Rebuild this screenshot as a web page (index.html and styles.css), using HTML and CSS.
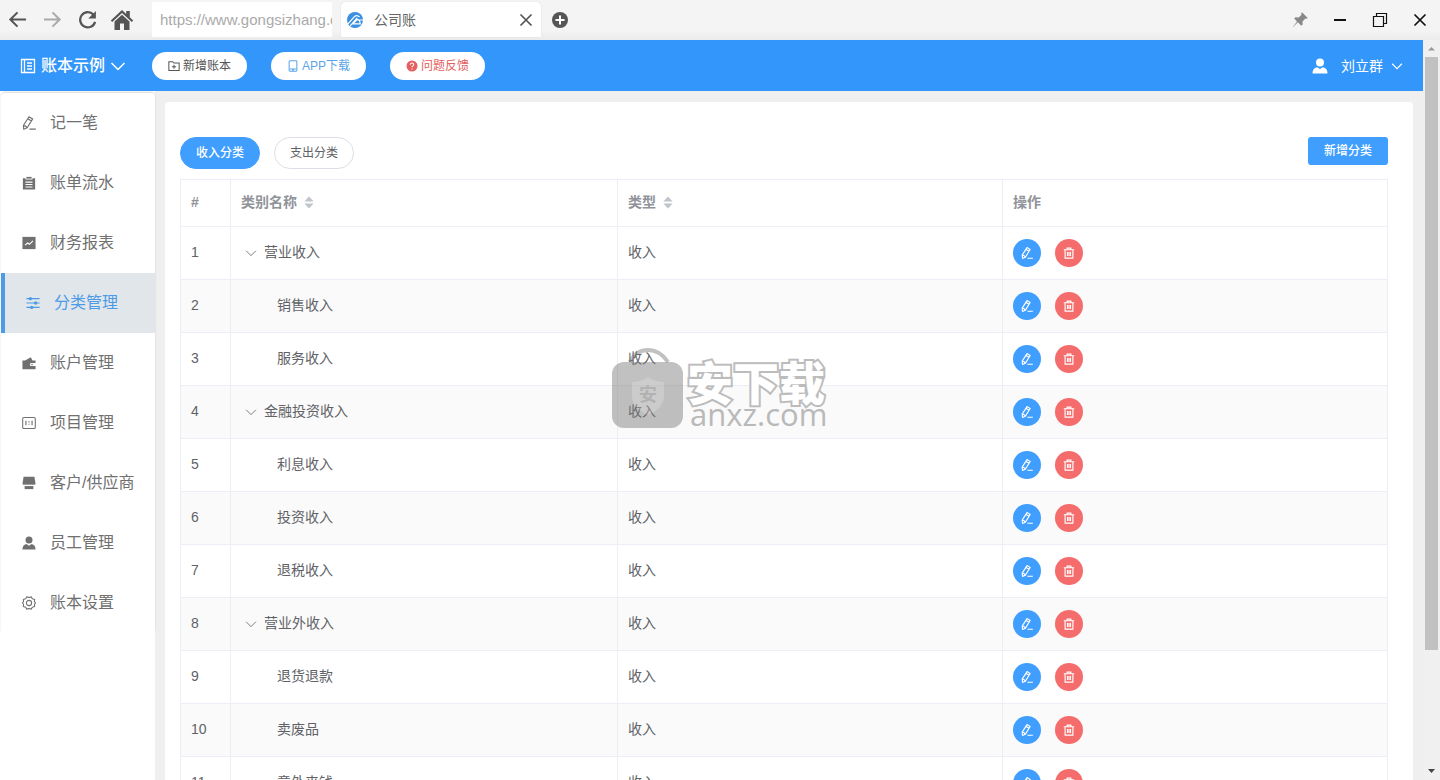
FILE: index.html
```html
<!DOCTYPE html>
<html lang="zh-CN">
<head>
<meta charset="utf-8">
<title>公司账</title>
<link rel="stylesheet" href="styles.css">
</head>
<body>
<svg class="defs" aria-hidden="true">
  <symbol id="i-left" viewBox="0 0 20 20"><path d="M19 10H3M10 2.500L2.500 10l7.500 7.500" fill="none" stroke="currentColor" stroke-width="2.200"/></symbol>
  <symbol id="i-right" viewBox="0 0 20 20"><path d="M1 10h16M10 2.500l7.500 7.500-7.500 7.500" fill="none" stroke="currentColor" stroke-width="2.200"/></symbol>
  <symbol id="i-reload" viewBox="0 0 20 20"><path d="M16.300 5A8 8 0 1 0 18 12.500" fill="none" stroke="currentColor" stroke-width="2.400"/><path d="M18.800 1v8h-8z" fill="currentColor"/></symbol>
  <symbol id="i-home" viewBox="0 0 24 22"><path d="M12 1L.8 11.500l1.400 1.500L12 4l9.800 9 1.400-1.500-3.400-3.200V2h-3.600v2.900z" fill="currentColor"/><path d="M4.500 12.500L12 5.700l7.500 6.800V21H14v-6.500h-4V21H4.500z" fill="currentColor"/></symbol>
  <symbol id="i-x" viewBox="0 0 16 16"><path d="M2.500 2.500l11 11M13.500 2.500l-11 11" fill="none" stroke="currentColor" stroke-width="1.700"/></symbol>
  <symbol id="i-plus" viewBox="0 0 16 16"><circle cx="8" cy="8" r="8" fill="currentColor"/><path d="M8 3.500v9M3.500 8h9" stroke="#fff" stroke-width="2"/></symbol>
  <symbol id="i-pin" viewBox="0 0 16 16"><path d="M10 .3l5.700 5.700-1.300.7-1-.2-2.900 2.900.2 3-1.400 1.300-3.500-3.500L.3 15.700 5 9.400 2.200 6.600l1.300-1.300 3.200.2L9.500 2.700l-.3-1.200z" fill="currentColor"/></symbol>
  <symbol id="i-min" viewBox="0 0 16 16"><path d="M2 8h12" stroke="currentColor" stroke-width="2"/></symbol>
  <symbol id="i-restore" viewBox="0 0 16 16"><path d="M4.500 4V1.500h10v10H12M1.500 4.500h10v10h-10z" fill="none" stroke="currentColor" stroke-width="1.200"/></symbol>
  <symbol id="i-logo" viewBox="0 0 16 16"><circle cx="8" cy="8" r="8" fill="#3b8fe0"/><path d="M1 11.800L7.200 4.800q2.600-2.600 5.300.2M3.200 13.800l7-8M6 11.800L9.500 8q3-1.500 3.800 3.800zM10 8h6" fill="none" stroke="#fff" stroke-width="1.200"/></symbol>
  <symbol id="i-book" viewBox="0 0 16 16"><path d="M1.500 1.500h13v13h-13zM4.500 1.500v13M7 5h5M7 8h5M7 11h5" fill="none" stroke="currentColor" stroke-width="1.300"/></symbol>
  <symbol id="i-down" viewBox="0 0 16 16"><path d="M1.500 5L8 11.500 14.500 5" fill="none" stroke="currentColor"/></symbol>
  <symbol id="i-folder" viewBox="0 0 14 14"><path d="M1 2h4.500L7 3.500h6v8.800H1zM7 5.500v4.800M4.600 7.900h4.800" fill="none" stroke="currentColor"/></symbol>
  <symbol id="i-phone" viewBox="0 0 14 14"><rect x="2.500" y="1" width="9" height="12" rx="1" fill="none" stroke="currentColor"/><path d="M3 10.500h8M6 11.800h2" stroke="currentColor"/></symbol>
  <symbol id="i-help" viewBox="0 0 14 14"><circle cx="7" cy="7" r="6.400" fill="currentColor"/><path d="M5 5.500q.2-1.900 2-1.900t2 1.700q0 1-1 1.600T7 8.600M7 9.800v1.200" fill="none" stroke="#fff"/></symbol>
  <symbol id="i-user" viewBox="0 0 16 16"><circle cx="8" cy="4.600" r="4" fill="currentColor"/><path d="M.5 15.500q0-5.200 4.500-6.300L8 11l3-1.800q4.500 1.100 4.500 6.300z" fill="currentColor"/></symbol>
  <symbol id="i-edit" viewBox="0 0 16 16"><path d="M8 .8l4.200 2.500-6.300 10.200L2 15.200l-.4-4.300zM6.600 3.200l4.200 2.500M1.700 11q2.800-.1 4.100 2.400M8.500 15h7.300" fill="none" stroke="currentColor" stroke-linejoin="round"/></symbol>
  <symbol id="i-list" viewBox="0 0 16 16"><path d="M1 2.500H4V4h8V2.500h3v13H1z" fill="currentColor"/><path d="M5 1h6v2H5z" fill="currentColor"/><path d="M4 7h8M4 9.700h8M4 12.500h8" stroke="#fff" stroke-width="1.200"/></symbol>
  <symbol id="i-chart" viewBox="0 0 16 16"><path d="M.5 1h15v14H.5z" fill="currentColor"/><path d="M3.500 10.500l3-2.500 2 1.500 4-4" fill="none" stroke="#fff" stroke-width="1.300"/></symbol>
  <symbol id="i-sliders" viewBox="0 0 16 16"><path d="M.5 3h15M.5 8h15M.5 13h15" stroke="currentColor" stroke-width="1.200"/><g fill="currentColor"><circle cx="5" cy="3" r="1.900"/><circle cx="11" cy="8" r="1.900"/><circle cx="6.500" cy="13" r="1.900"/></g></symbol>
  <symbol id="i-wallet" viewBox="0 0 16 16"><path d="M.5 5h3l6.500-3.500L12 5h3.500v3H11q-2 0-2 1.700t2 1.800h4.500v3.500H.5z" fill="currentColor"/><circle cx="11.500" cy="9.700" r=".9" fill="currentColor"/></symbol>
  <symbol id="i-ratio" viewBox="0 0 16 16"><rect x=".8" y="1.700" width="14.400" height="12.600" rx="1.500" fill="none" stroke="currentColor" stroke-width="1.200"/><path d="M4.500 5.500v5M11.500 5.500v5M8 6v1.300M8 8.800v1.300" stroke="currentColor" stroke-width="1.300"/></symbol>
  <symbol id="i-shop" viewBox="0 0 16 16"><path d="M1.800.8h12.400L15.500 9q-.8 1.500-2.300.6-1.300.9-2.600 0-1.300.9-2.600 0-1.300.9-2.600 0-1.300.9-2.600 0Q1.300 10.500.5 9z" fill="currentColor"/><path d="M3 11.500h10v3.500H3z" fill="currentColor"/></symbol>
  <symbol id="i-gear" viewBox="0 0 16 16"><path d="M5.500 1l2.500.8 2.500-.8 1.300 2.200 2.700.8L14.200 6.500 15.500 8l-1.300 1.500.3 2.500-2.700.8-1.300 2.200L8 14.200 5.500 15l-1.300-2.200L1.500 12l.3-2.500L.5 8l1.300-1.500L1.500 4l2.700-.8z" fill="none" stroke="currentColor" stroke-width="1.200" stroke-linejoin="round"/><circle cx="8" cy="8" r="3" fill="none" stroke="currentColor" stroke-width="1.200"/></symbol>
  <symbol id="i-trash" viewBox="0 0 16 16"><path d="M1 3.700h14M5.500 3.500v-2h5v2M2.800 4v10.800h10.400V4M6 6.500v5.500M8 6.500v5.500M10 6.500v5.500" fill="none" stroke="currentColor"/></symbol>
  <symbol id="i-sort" viewBox="0 0 10 14"><path d="M0 6l5-5.500L10 6zM0 8l5 5.500L10 8z" fill="currentColor"/></symbol>
</svg>

<header class="chrome">
  <button class="chrome-btn" aria-label="后退"><svg class="s20"><use href="#i-left"/></svg></button>
  <button class="chrome-btn faded" aria-label="前进"><svg class="s20"><use href="#i-right"/></svg></button>
  <button class="chrome-btn" aria-label="刷新"><svg class="s20"><use href="#i-reload"/></svg></button>
  <button class="chrome-btn" aria-label="主页"><svg class="s24"><use href="#i-home"/></svg></button>
  <input class="url" type="text" aria-label="网址" value="https://www.gongsizhang.com">
  <div class="tab">
    <svg class="s16"><use href="#i-logo"/></svg>
    <span class="tab-title">公司账</span>
    <button class="plain" aria-label="关闭标签"><svg class="s16"><use href="#i-x"/></svg></button>
  </div>
  <button class="plain new-tab" aria-label="新标签"><svg class="s16"><use href="#i-plus"/></svg></button>
  <div class="window-btns">
    <button class="win-btn pin" aria-label="固定"><svg class="s16"><use href="#i-pin"/></svg></button>
    <button class="win-btn" aria-label="最小化"><svg class="s16"><use href="#i-min"/></svg></button>
    <button class="win-btn" aria-label="还原"><svg class="s16"><use href="#i-restore"/></svg></button>
    <button class="win-btn" aria-label="关闭"><svg class="s16"><use href="#i-x"/></svg></button>
  </div>
</header>

<div class="viewport">
  <div class="page">
    <div class="topbar">
      <button class="plain book"><svg class="s16"><use href="#i-book"/></svg>账本示例<svg class="s16"><use href="#i-down"/></svg></button>
      <div class="pills">
        <button class="pill"><svg class="s12"><use href="#i-folder"/></svg>新增账本</button>
        <button class="pill blue"><svg class="s12"><use href="#i-phone"/></svg>APP下载</button>
        <button class="pill red"><svg class="s12"><use href="#i-help"/></svg>问题反馈</button>
      </div>
      <button class="plain user"><svg class="s16"><use href="#i-user"/></svg><span>刘立群</span><svg class="s12"><use href="#i-down"/></svg></button>
    </div>
    <div class="body">
      <aside class="side">
        <nav class="nav">
          <a class="nav-item" href="#"><svg class="s14"><use href="#i-edit"/></svg>记一笔</a>
          <a class="nav-item" href="#"><svg class="s14"><use href="#i-list"/></svg>账单流水</a>
          <a class="nav-item" href="#"><svg class="s14"><use href="#i-chart"/></svg>财务报表</a>
          <a class="nav-item active" href="#"><svg class="s14"><use href="#i-sliders"/></svg>分类管理</a>
          <a class="nav-item" href="#"><svg class="s14"><use href="#i-wallet"/></svg>账户管理</a>
          <a class="nav-item" href="#"><svg class="s14"><use href="#i-ratio"/></svg>项目管理</a>
          <a class="nav-item" href="#"><svg class="s14"><use href="#i-shop"/></svg>客户/供应商</a>
          <a class="nav-item" href="#"><svg class="s14"><use href="#i-user"/></svg>员工管理</a>
          <a class="nav-item" href="#"><svg class="s14"><use href="#i-gear"/></svg>账本设置</a>
        </nav>
      </aside>
      <main class="main">
        <section class="card">
          <div class="toolbar">
            <button class="switch on">收入分类</button>
            <button class="switch">支出分类</button>
            <button class="add">新增分类</button>
          </div>
          <table class="grid">
            <colgroup><col class="c-num"><col class="c-name"><col><col></colgroup>
            <thead>
              <tr><th>#</th><th>类别名称<svg class="sort"><use href="#i-sort"/></svg></th><th>类型<svg class="sort"><use href="#i-sort"/></svg></th><th>操作</th></tr>
            </thead>
            <tbody>
              <tr><td>1</td><td><svg class="fold"><use href="#i-down"/></svg>营业收入</td><td>收入</td><td class="act"><div class="ops"><button class="op" aria-label="编辑"><svg class="s12"><use href="#i-edit"/></svg></button><button class="op del" aria-label="删除"><svg class="s12"><use href="#i-trash"/></svg></button></div></td></tr>
              <tr><td>2</td><td class="child">销售收入</td><td>收入</td><td class="act"><div class="ops"><button class="op" aria-label="编辑"><svg class="s12"><use href="#i-edit"/></svg></button><button class="op del" aria-label="删除"><svg class="s12"><use href="#i-trash"/></svg></button></div></td></tr>
              <tr><td>3</td><td class="child">服务收入</td><td>收入</td><td class="act"><div class="ops"><button class="op" aria-label="编辑"><svg class="s12"><use href="#i-edit"/></svg></button><button class="op del" aria-label="删除"><svg class="s12"><use href="#i-trash"/></svg></button></div></td></tr>
              <tr><td>4</td><td><svg class="fold"><use href="#i-down"/></svg>金融投资收入</td><td>收入</td><td class="act"><div class="ops"><button class="op" aria-label="编辑"><svg class="s12"><use href="#i-edit"/></svg></button><button class="op del" aria-label="删除"><svg class="s12"><use href="#i-trash"/></svg></button></div></td></tr>
              <tr><td>5</td><td class="child">利息收入</td><td>收入</td><td class="act"><div class="ops"><button class="op" aria-label="编辑"><svg class="s12"><use href="#i-edit"/></svg></button><button class="op del" aria-label="删除"><svg class="s12"><use href="#i-trash"/></svg></button></div></td></tr>
              <tr><td>6</td><td class="child">投资收入</td><td>收入</td><td class="act"><div class="ops"><button class="op" aria-label="编辑"><svg class="s12"><use href="#i-edit"/></svg></button><button class="op del" aria-label="删除"><svg class="s12"><use href="#i-trash"/></svg></button></div></td></tr>
              <tr><td>7</td><td class="child">退税收入</td><td>收入</td><td class="act"><div class="ops"><button class="op" aria-label="编辑"><svg class="s12"><use href="#i-edit"/></svg></button><button class="op del" aria-label="删除"><svg class="s12"><use href="#i-trash"/></svg></button></div></td></tr>
              <tr><td>8</td><td><svg class="fold"><use href="#i-down"/></svg>营业外收入</td><td>收入</td><td class="act"><div class="ops"><button class="op" aria-label="编辑"><svg class="s12"><use href="#i-edit"/></svg></button><button class="op del" aria-label="删除"><svg class="s12"><use href="#i-trash"/></svg></button></div></td></tr>
              <tr><td>9</td><td class="child">退货退款</td><td>收入</td><td class="act"><div class="ops"><button class="op" aria-label="编辑"><svg class="s12"><use href="#i-edit"/></svg></button><button class="op del" aria-label="删除"><svg class="s12"><use href="#i-trash"/></svg></button></div></td></tr>
              <tr><td>10</td><td class="child">卖废品</td><td>收入</td><td class="act"><div class="ops"><button class="op" aria-label="编辑"><svg class="s12"><use href="#i-edit"/></svg></button><button class="op del" aria-label="删除"><svg class="s12"><use href="#i-trash"/></svg></button></div></td></tr>
              <tr><td>11</td><td class="child">意外来钱</td><td>收入</td><td class="act"><div class="ops"><button class="op" aria-label="编辑"><svg class="s12"><use href="#i-edit"/></svg></button><button class="op del" aria-label="删除"><svg class="s12"><use href="#i-trash"/></svg></button></div></td></tr>
            </tbody>
          </table>
        </section>
      </main>
    </div>
  </div>
  <div class="scrollbar" aria-hidden="true">
    <svg class="arrow" viewBox="0 0 17 17"><path d="M5 10.500h7L8.500 7z" fill="#999"/></svg>
    <div class="track"><div class="thumb"></div></div>
    <svg class="arrow" viewBox="0 0 17 17"><path d="M5 6h7l-3.500 4z" fill="#444"/></svg>
  </div>
</div>

<div class="watermark">
  <div class="bag">
    <svg viewBox="0 0 72 82"><path d="M18 14Q24 2 36 2t20 12" fill="none" stroke="#767676" stroke-opacity=".45" stroke-width="4"/><rect x="0" y="14" width="71" height="66" rx="12" fill="#767676" fill-opacity=".45"/><path d="M20 34q9 0 16-5 7 5 16 5v14q0 12-16 19-16-7-16-19z" fill="#fff" fill-opacity=".2"/></svg>
    <span class="seal">安</span>
  </div>
  <div class="mark-text"><span class="mark-cn">安下载</span><span class="mark-en">anxz.com</span></div>
</div>
</body>
</html>
```

FILE: styles.css
```css
* { box-sizing: border-box; }

body {
  margin: 0;
  height: 100vh;
  overflow: hidden;
  display: flex;
  flex-direction: column;
  background: #efefef;
  color: #606266;
  font: 14px/20px "Liberation Sans", "Noto Sans CJK SC", sans-serif;
}

button, input { font: inherit; }
button { cursor: pointer; }
svg { flex: none; stroke-width: 1.5; }

.defs { position: absolute; width: 0; height: 0; }
.s12 { width: 12px; height: 12px; }
.s14 { width: 14px; height: 14px; }
.s16 { width: 16px; height: 16px; }
.s20 { width: 19px; height: 19px; }
.s24 { width: 24px; height: 22px; }

.plain, .chrome-btn, .win-btn {
  display: flex;
  align-items: center;
  justify-content: center;
  padding: 0;
  border: 0;
  background: none;
  color: #555;
}

/* Browser frame */
.chrome {
  flex: none;
  display: flex;
  align-items: center;
  height: 40px;
  padding-bottom: 1px;
  background: linear-gradient(#f4f4f4 75%, #ebebeb);
}
.chrome-btn { width: 34px; height: 35px; margin-right: 1px; }
.faded { color: #aaa; }
.url {
  width: 180px;
  height: 35px;
  margin-left: 12px;
  padding: 0 0 0 8px;
  border: 0;
  background: #fff;
  color: #aaa;
  font-size: 15px;
}
.tab {
  display: flex;
  align-items: center;
  width: 200px;
  height: 35px;
  margin-left: 9px;
  padding: 0 7px 0 6px;
  border-radius: 5px 5px 0 0;
  background: #fff;
  box-shadow: 0 0 2px #ddd;
}
.tab-title { flex: 1; margin-left: 11px; color: #666; }
.new-tab { margin-left: 11px; }
.window-btns { display: flex; margin-left: auto; }
.win-btn { width: 40px; height: 38px; color: #111; }
.pin { color: #888; }

.viewport { flex: 1; display: flex; min-height: 0; }
.page { flex: 1; display: flex; flex-direction: column; min-width: 0; overflow: hidden; }

/* Top bar */
.topbar {
  flex: none;
  display: flex;
  align-items: center;
  height: 51px;
  padding: 1px 20px 0;
  background: #3396fb;
}
.book { gap: 5px; color: #fff; font-size: 16px; font-weight: 500; }
.pills { display: flex; gap: 24px; margin-left: 26px; }
.pill {
  display: flex;
  align-items: center;
  justify-content: center;
  gap: 3px;
  width: 95px;
  height: 28px;
  padding: 0;
  border: 0;
  border-radius: 14px;
  background: #fff;
  color: #555;
  font-size: 12px;
}
.pill svg { stroke-width: 1.2; }
.blue { color: #5aa5ea; }
.red { color: #e56060; }
.user { margin-left: auto; color: #fff; }
.user span { margin: 0 8px 0 13px; }

.body { flex: 1; display: flex; min-height: 0; }

/* Side navigation */
.side { flex: none; width: 155px; padding: 2px 0 0 1px; background: #fff; }
.nav { border-radius: 4px; box-shadow: 0 -1px 2px rgba(0, 0, 0, .15); }
.nav-item {
  display: flex;
  align-items: center;
  gap: 14px;
  height: 60px;
  padding-left: 21px;
  color: #707070;
  font-size: 16px;
  text-decoration: none;
}
.nav-item svg { stroke-width: 1.3; }
.active {
  border-left: 4px solid #4d9be6;
  background: #e1e6eb;
  color: #4d9be6;
}

/* Content */
.main { flex: 1; min-width: 0; padding: 11px 10px 0; }
.card { padding: 35px 25px 40px 15px; border-radius: 4px; background: #fff; }
.toolbar { display: flex; align-items: flex-start; margin-bottom: 10px; }
.switch {
  width: 80px;
  height: 32px;
  margin-right: 14px;
  padding: 0;
  border: 1px solid #dcdfe6;
  border-radius: 16px;
  background: #fff;
  color: #606266;
  font-size: 12px;
}
.on, .add { border-color: #409eff; background: #409eff; color: #fff; font-weight: 500; }
.add {
  width: 80px;
  height: 28px;
  margin-left: auto;
  padding: 0;
  border: 0;
  border-radius: 3px;
  font-size: 12px;
}

.grid { width: 100%; table-layout: fixed; border-collapse: collapse; }
.c-num { width: 50px; }
.c-name { width: 387px; }
.grid th, .grid td { padding: 0 10px 2px; border: 1px solid #ebeef5; text-align: left; vertical-align: middle; }
.grid th { height: 47px; color: #909399; font-weight: 700; }
.grid td { height: 53px; }
.grid .act { padding-bottom: 0; }
.grid tbody tr:nth-child(even) { background: #fafafa; }
.grid .child { padding-left: 46px; }
.sort { width: 10px; height: 13px; margin-left: 7px; color: #c0c4cc; vertical-align: -2px; }
.fold { width: 12px; height: 12px; margin: 0 7px 0 4px; stroke-width: 1.1; vertical-align: -2px; }
.ops { display: flex; gap: 14px; }
.op {
  display: flex;
  align-items: center;
  justify-content: center;
  width: 28px;
  height: 28px;
  padding: 0;
  border: 0;
  border-radius: 50%;
  background: #409eff;
  color: #fff;
}
.del { background: #f56c6c; }

/* Page scrollbar */
.scrollbar { flex: none; display: flex; flex-direction: column; width: 17px; background: #f0f0f0; }
.arrow { width: 17px; height: 17px; }
.track { flex: 1; padding: 0 2px; }
.thumb { height: 84%; background: #c1c1c1; }

/* Overlay mark */
.watermark {
  position: absolute;
  left: 612px;
  top: 348px;
  display: flex;
  gap: 3px;
  pointer-events: none;
}
.bag { position: relative; width: 72px; height: 82px; }
.bag svg { display: block; width: 72px; height: 82px; }
.seal { position: absolute; left: 27px; top: 37px; color: #b2b2b2; font-size: 18px; font-weight: 700; }
.mark-text { display: flex; flex-direction: column; padding-top: 10px; }
.mark-cn {
  color: #fff;
  font: 900 46px/44px "Noto Sans CJK SC", sans-serif;
  -webkit-text-stroke: 4px #bcbcbc;
  paint-order: stroke fill;
}
.mark-en { padding-left: 3px; color: #b9b9b9; font: 500 31px/24px "Open Sans", sans-serif; }
```
